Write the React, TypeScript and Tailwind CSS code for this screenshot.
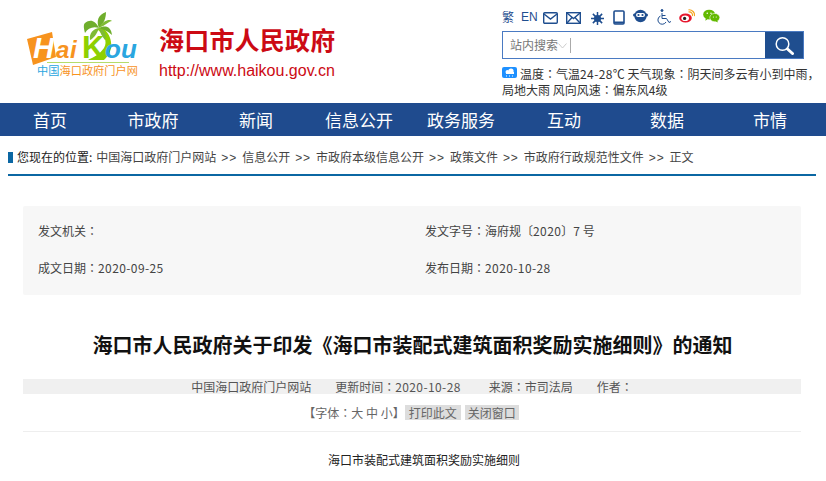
import { useState } from "react";

const navItems = [
  { label: "首页", w: "w-[100px]" },
  { label: "市政府", w: "w-[106px]" },
  { label: "新闻", w: "w-[100px]" },
  { label: "信息公开", w: "w-[106px]" },
  { label: "政务服务", w: "w-[98px]" },
  { label: "互动", w: "w-[108px]" },
  { label: "数据", w: "w-[98px]" },
  { label: "市情", w: "w-[108px]" },
];

const crumbs = ["中国海口政府门户网站", "信息公开", "市政府本级信息公开", "政策文件", "市政府行政规范性文件"];

// full width colon sits centred in the reference
function Colon() {
  return <span className="font-['Noto_Sans_CJK_JP',sans-serif]">：</span>;
}

function Num({ children }: { children: string }) {
  return <span className="tracking-[0.4px]">{children}</span>;
}

function Logo() {
  const latin = "Liberation Sans, sans-serif";
  return (
    <svg width="116" height="70" viewBox="0 0 116 70" className="block">
      {/* orange tile */}
      <path d="M1 28 L26 21 L30 46 L7 54 Z" fill="#f7931e" />
      {/* trunk */}
      <path d="M71 18 C78 24 82 30 78 37 C74 43 68 46 62 49 L78 49 C88 40 88 26 76 16 Z" fill="#8fd000" />
      {/* palm leaves */}
      <path d="M73 17 C69 9 64 8 59 12 C57 14 58 18 59 22 C62 17 67 15 73 17 Z" fill="#6fae2c" />
      <path d="M73 17 C67 18 63 22 64 29 C67 28 71 23 73 17 Z" fill="#7fbb34" />
      <path d="M73 17 C70 10 72 4 80 1 C80 7 78 12 73 17 Z" fill="#6fae2c" />
      <path d="M73 17 C77 9 84 8 86 10 C83 10 80 14 73 17 Z" fill="#7fbb34" />
      <path d="M73 17 C79 14 85 15 86 24 C82 20 78 19 73 17 Z" fill="#6fae2c" />
      <path d="M73 17 C79 19 81 24 79 29 C76 25 74 22 73 17 Z" fill="#7fbb34" />
      <text x="7" y="47" fontFamily={latin} fontSize="29" fontWeight="700" fontStyle="italic" fill="#fff">H</text>
      <text x="30" y="47" fontFamily={latin} fontSize="24" fontWeight="700" fontStyle="italic" fill="#f7931e">a</text>
      <text x="44" y="47" fontFamily={latin} fontSize="24" fontWeight="700" fontStyle="italic" fill="#f7931e">i</text>
      <text x="56" y="47" fontFamily={latin} fontSize="31" fontWeight="700" fill="#8fd000">K</text>
      <text x="79" y="47" fontFamily={latin} fontSize="26" fontWeight="700" fontStyle="italic" fill="#2aa6e0">ou</text>
      <rect x="21" y="51" width="82" height="1" fill="#b5dc6b" />
      <text x="11" y="64" fontFamily="Noto Sans CJK SC, sans-serif" fontSize="11.2" fill="#2aa6e0">中国</text>
      <text x="33.500" y="64" fontFamily="Noto Sans CJK SC, sans-serif" fontSize="11.2" fill="#f7931e">海口政府门户网</text>
    </svg>
  );
}

function IconBar() {
  const stroke = "#1f4e8f";
  return (
    <div className="flex items-start h-[16px] text-[#1f4e8f] text-[12px] leading-[16px]">
      <span className="w-[19px]">繁</span>
      <span className="w-[22px] font-['Liberation_Sans',sans-serif]">EN</span>
      <svg width="15" height="12" viewBox="0 0 15 12" className="mr-[8px] mt-[3px]" fill="none" stroke={stroke} strokeWidth="1.4">
        <rect x="0.7" y="0.7" width="13.6" height="10.6" rx="1" />
        <path d="M1 2l6.500 5L14 2" />
      </svg>
      <svg width="15" height="12" viewBox="0 0 15 12" className="mr-[10px] mt-[3px]" fill="none" stroke={stroke} strokeWidth="1.4">
        <rect x="0.7" y="0.7" width="13.6" height="10.6" />
        <path d="M1 1l6.500 5.500L14 1M1 11l5-5.500M14 11L9 5.500" />
      </svg>
      <svg width="13" height="13" viewBox="0 0 14 14" className="mr-[9px] mt-[3px]" stroke={stroke} strokeWidth="1.6" fill={stroke}>
        <path d="M7 0v14M0 7h14M2 2l10 10M12 2L2 12" />
        <circle cx="7" cy="7" r="3" />
      </svg>
      <svg width="12" height="15" viewBox="0 0 12 15" className="mr-[8px] mt-[1px]" fill="none" stroke={stroke}>
        <rect x="1" y="1" width="10" height="13" rx="1" strokeWidth="1.6" />
        <path d="M1 12.500h10" strokeWidth="2" />
      </svg>
      <svg width="15" height="14" viewBox="0 0 15 14" className="mr-[9px]">
        <circle cx="7.500" cy="7" r="6.200" fill={stroke} />
        <rect x="0" y="4.500" width="15" height="3" rx="1.500" fill={stroke} />
        <rect x="3" y="4" width="9" height="4" rx="2" fill="#fff" />
        <circle cx="5.500" cy="6" r="1.100" fill={stroke} />
        <circle cx="9.500" cy="6" r="1.100" fill={stroke} />
      </svg>
      <svg width="15" height="16" viewBox="0 0 15 16" className="mr-[7px]" fill="none" stroke={stroke} strokeWidth="1">
        <circle cx="5" cy="1.500" r="1" fill={stroke} />
        <path d="M5 4v5.500h4.500l2.500 4 2-1" />
        <path d="M5 6.500h3.500" />
        <path d="M3.500 7a4.300 4.300 0 1 0 5.500 6" />
      </svg>
      <svg width="16" height="14" viewBox="0 0 16 14" className="mr-[8px]">
        <ellipse cx="6.500" cy="9" rx="6.300" ry="4.600" fill="#e6162d" />
        <ellipse cx="6.200" cy="9.300" rx="3.800" ry="2.800" fill="#fff" />
        <circle cx="5.600" cy="9.400" r="1.600" fill="#222" />
        <path d="M9.500 3a3.300 3.300 0 0 1 4 4" stroke="#f5a623" strokeWidth="1.200" fill="none" />
        <path d="M9.500 0.800a5.500 5.500 0 0 1 6 6.400" stroke="#f5a623" strokeWidth="1.200" fill="none" />
      </svg>
      <svg width="17" height="14" viewBox="0 0 18 14">
        <ellipse cx="6.500" cy="5.500" rx="6.300" ry="5.200" fill="#62b900" />
        <path d="M3 9l-.5 3 3-2z" fill="#62b900" />
        <ellipse cx="12.500" cy="8.700" rx="5.300" ry="4.400" fill="#62b900" stroke="#fff" strokeWidth=".6" />
        <path d="M15 12l1 2-3-1.500z" fill="#62b900" />
        <circle cx="4.500" cy="4" r=".8" fill="#fff" />
        <circle cx="8.500" cy="4" r=".8" fill="#fff" />
        <circle cx="11" cy="8" r=".6" fill="#fff" />
        <circle cx="14" cy="8" r=".6" fill="#fff" />
      </svg>
    </div>
  );
}

function SearchBox() {
  const [q, setQ] = useState("");
  return (
    <div className="flex mt-[6px] w-[302px] h-[28px] border border-[#4a7ac2] bg-white">
      <div className="flex items-center flex-1 pl-[7px] text-[12px] text-[#777]">
        <input
          value={q}
          onChange={(e) => setQ(e.target.value)}
          placeholder="站内搜索"
          className="w-[48px] outline-none placeholder:text-[#777]"
        />
        <svg width="9" height="6" viewBox="0 0 9 6" fill="none" stroke="#ccc" className="mt-[1px]">
          <path d="M0.500 0.500l4 4.500 4-4.500" />
        </svg>
        <div className="w-px h-[15px] bg-[#aaa] ml-[3px]" />
      </div>
      <button className="w-[38px] bg-[#1f4e8f] flex items-center justify-center">
        <svg width="20" height="19" viewBox="0 0 20 19" fill="none">
          <circle cx="8.500" cy="8" r="6.300" stroke="#fff" strokeWidth="1.500" />
          <path d="M13.500 13l5 4.500" stroke="#fff" strokeWidth="3" strokeLinecap="round" />
        </svg>
      </button>
    </div>
  );
}

export default function App() {
  return (
    <div className="w-[826px] h-[481px] overflow-hidden bg-white font-['Noto_Sans_CJK_SC',sans-serif] text-[#333]">
      {/* Header */}
      <header className="flex h-[103px]">
        <div className="pl-[26px] pt-[11px] w-[159px]">
          <Logo />
        </div>
        <div className="w-[343px] pt-[24px]">
          <div className="text-[#cc0a14] font-bold text-[25px] leading-[30px] tracking-[0.2px] whitespace-nowrap">海口市人民政府</div>
          <div className="mt-[9px] text-[#cc0a14] font-['Liberation_Sans',sans-serif] text-[16px] leading-[16px]">http://www.haikou.gov.cn</div>
        </div>
        <div className="pt-[9px] w-[324px]">
          <IconBar />
          <SearchBox />
          <div className="mt-[7px] text-[12px] leading-[16px] text-[#333] w-[322px]">
            <svg width="15" height="11" viewBox="0 0 15 11" className="inline mr-[3px] align-[1px]">
              <rect width="15" height="11" rx="2" fill="#1e90ff" />
              <circle cx="5.500" cy="5" r="2" fill="#fff" />
              <circle cx="9" cy="4" r="2.600" fill="#fff" />
              <rect x="4" y="5" width="8" height="2" fill="#fff" />
              <path d="M4 9h1M7 9h1M10 9h1" stroke="#fff" />
            </svg>
            温度<Colon />气温<Num>24-28</Num>℃ 天气现象<Colon />阴天间多云有小到中雨，局地大雨 风向风速<Colon />偏东风4级
          </div>
        </div>
      </header>

      {/* Nav */}
      <nav className="flex h-[33px] bg-[#1f4b8e] text-white text-[17px] leading-[33px]">
        {navItems.map((n) => (
          <a key={n.label} className={`${n.w} text-center`}>{n.label}</a>
        ))}
      </nav>

      {/* Breadcrumb */}
      <div className="ml-[8px] mr-[10px] mt-[13px] h-[27px] border-b-2 border-[#0b67a3] flex items-start text-[12px] leading-[16px] whitespace-nowrap">
        <div className="w-[5px] h-[11px] mt-[3px] bg-[#0b67a3] mr-[4px]" />
        <span className="text-[#222]">您现在的位置:</span>
        <span className="ml-[4px] text-[#444]">
          {crumbs.map((c) => (
            <span key={c}>{c}<span className="font-['Liberation_Sans',sans-serif] mx-[5px] tracking-[0.9px]">&gt;&gt;</span></span>
          ))}
          正文
        </span>
      </div>

      {/* Meta panel */}
      <section className="ml-[23px] mt-[30px] w-[778px] h-[89px] bg-[#f7f7f7] grid grid-cols-[387px_1fr] content-start pl-[15px] pt-[17px] text-[12px] text-[#444] leading-[16px] rounded-[2px]">
        <div>发文机关<Colon /></div>
        <div>发文字号<Colon />海府规〔<Num>2020</Num>〕7 号</div>
        <div className="mt-[21px]">成文日期<Colon /><Num>2020-09-25</Num></div>
        <div className="mt-[21px]">发布日期<Colon /><Num>2020-10-28</Num></div>
      </section>

      {/* Title */}
      <h1 className="mt-[37px] w-[825px] text-center text-[20px] leading-[26px] font-bold text-[#111]">
        海口市人民政府关于印发《海口市装配式建筑面积奖励实施细则》的通知
      </h1>

      {/* Source line */}
      <div className="ml-[23px] w-[778px] mt-[21px] h-[15px] bg-[#f0f0f0] flex justify-center gap-[24px] text-[12px] leading-[15px] text-[#555]">
        <span>中国海口政府门户网站</span>
        <span>更新时间<Colon /><Num>2020-10-28</Num></span>
        <span className="ml-[4px]">来源<Colon />市司法局</span>
        <span>作者<Colon /></span>
      </div>

      {/* Tools */}
      <div className="ml-[23px] w-[778px] mt-[11px] h-[27px] pr-[2px] border-b border-[#eee] flex justify-center items-start text-[12px] leading-[15px] text-[#666]">
        <span>【字体<Colon />大 中 小】</span>
        <span className="bg-[#ddd] px-[4px]">打印此文</span>
        <span className="bg-[#ddd] px-[3px] ml-[4px]">关闭窗口</span>
      </div>

      {/* Body */}
      <p className="mt-[20px] pl-[22px] text-center text-[12px] leading-[16px] text-[#222]">海口市装配式建筑面积奖励实施细则</p>
    </div>
  );
}
